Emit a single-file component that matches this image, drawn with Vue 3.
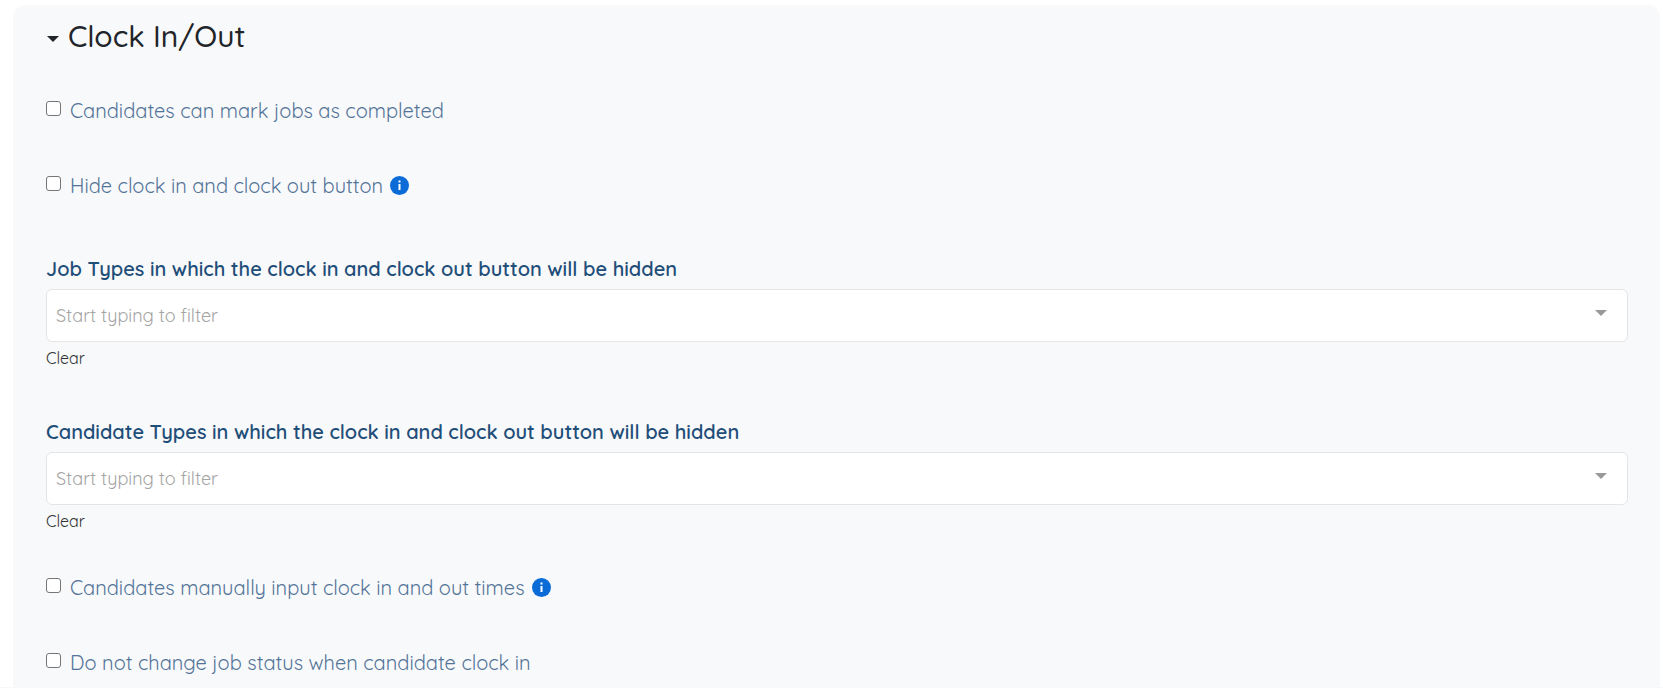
<script setup>
import { ref } from 'vue'

const topOptions = ref([
  { id: 'mark-completed', label: 'Candidates can mark jobs as completed', info: false, checked: false },
  { id: 'hide-clock', label: 'Hide clock in and clock out button', info: true, checked: false }
])
const filters = ref([
  { id: 'job-types', label: 'Job Types in which the clock in and clock out button will be hidden', value: '' },
  { id: 'candidate-types', label: 'Candidate Types in which the clock in and clock out button will be hidden', value: '' }
])
const bottomOptions = ref([
  { id: 'manual-times', label: 'Candidates manually input clock in and out times', info: true, checked: false },
  { id: 'keep-status', label: 'Do not change job status when candidate clock in', info: false, checked: false }
])
</script>

<template>
  <main class="page">
    <details class="panel" open>
      <summary class="heading">
        <svg class="caret" viewBox="0 0 12 6" aria-hidden="true"><path d="M0 0h12L6 6z" /></svg>
        <h2>Clock In/Out</h2>
      </summary>

      <div class="body">
        <div class="options">
          <div v-for="o in topOptions" :key="o.id" class="option">
            <input :id="o.id" v-model="o.checked" type="checkbox" />
            <label :for="o.id">{{ o.label }}</label>
            <button v-if="o.info" class="info" type="button" aria-label="More information">
              <svg viewBox="0 0 19 19" aria-hidden="true">
                <circle cx="9.5" cy="9.5" r="9.5" fill="#0b6cd8" />
                <path d="M8.5 4.5h2v2h-2zM8.5 8h2v6h-2z" fill="#fff" />
              </svg>
            </button>
          </div>
        </div>

        <div class="filters">
          <div v-for="f in filters" :key="f.id" class="field">
            <label :for="f.id">{{ f.label }}</label>
            <div class="combo">
              <input :id="f.id" v-model="f.value" type="text" placeholder="Start typing to filter" />
              <button class="toggle" type="button" aria-label="Show options">
                <svg viewBox="0 0 12 6" aria-hidden="true"><path d="M0 0h12L6 6z" /></svg>
              </button>
            </div>
            <button class="clear" type="button" @click="f.value = ''">Clear</button>
          </div>
        </div>

        <div class="options">
          <div v-for="o in bottomOptions" :key="o.id" class="option">
            <input :id="o.id" v-model="o.checked" type="checkbox" />
            <label :for="o.id">{{ o.label }}</label>
            <button v-if="o.info" class="info" type="button" aria-label="More information">
              <svg viewBox="0 0 19 19" aria-hidden="true">
                <circle cx="9.5" cy="9.5" r="9.5" fill="#0b6cd8" />
                <path d="M8.5 4.5h2v2h-2zM8.5 8h2v6h-2z" fill="#fff" />
              </svg>
            </button>
          </div>
        </div>
      </div>
    </details>
  </main>
</template>

<style>
body {
  margin: 0;
  background: #fff;
}
</style>

<style scoped>
.page {
  padding: 5px 3px 0 13px;
  border-bottom: 1px solid #f8f8f9;
  font-family: Quicksand, Lato, "Open Sans", sans-serif;
}
.panel {
  padding: 12px 32px 12px 33px;
  border-radius: 12px 12px 0 0;
  background: #f8f9fb;
}
.heading {
  display: flex;
  align-items: center;
  gap: 9px;
  list-style: none;
  color: #212529;
  cursor: pointer;
}
.heading::-webkit-details-marker {
  display: none;
}
.caret {
  width: 12px;
  height: 6px;
  margin: 6px 0 0 1px;
  fill: #212529;
}
h2 {
  margin: 0;
  font-size: 30px;
  font-weight: 500;
  line-height: 38px;
}
.body {
  padding-top: 44px;
}
.options {
  display: grid;
  gap: 51px;
}
.option {
  display: flex;
  align-items: flex-start;
  line-height: 24px;
}
.option input {
  appearance: none;
  box-sizing: border-box;
  width: 15px;
  height: 15px;
  margin: 2px 9px 0 0;
  border: 1px solid #767676;
  border-radius: 3px;
  background: #fff;
}
.option input:checked {
  border-color: #0b6cd8;
  background: #0b6cd8;
}
.option label {
  color: #537498;
  font-size: 20px;
}
button {
  padding: 0;
  border: 0;
  background: none;
  font-family: inherit;
  cursor: pointer;
}
.info {
  width: 19px;
  height: 19px;
  margin: 2px 0 0 7px;
}
.info svg,
.toggle svg {
  display: block;
}
.filters {
  display: grid;
  gap: 51px;
  padding: 59px 0 44px;
}
.field {
  display: flex;
  flex-direction: column;
  align-items: flex-start;
}
.field label {
  margin-bottom: 8px;
  color: #1f4e79;
  font-size: 20px;
  font-weight: 600;
  line-height: 24px;
}
.combo {
  display: flex;
  align-self: stretch;
  box-sizing: border-box;
  height: 53px;
  border: 1px solid #e4e5e7;
  border-radius: 6px;
  background: #fff;
}
.combo input {
  flex: 1;
  min-width: 0;
  padding: 0 9px;
  border: 0;
  outline: 0;
  background: none;
  color: #212529;
  font-family: inherit;
  font-size: 18px;
}
.combo input::placeholder {
  color: #a4a4a4;
}
.toggle {
  padding: 0 20px 6px;
}
.toggle svg {
  width: 12px;
  height: 6px;
  fill: #999;
}
.clear {
  margin-top: 5px;
  color: #333;
  font-size: 16px;
  line-height: 22px;
}
</style>
